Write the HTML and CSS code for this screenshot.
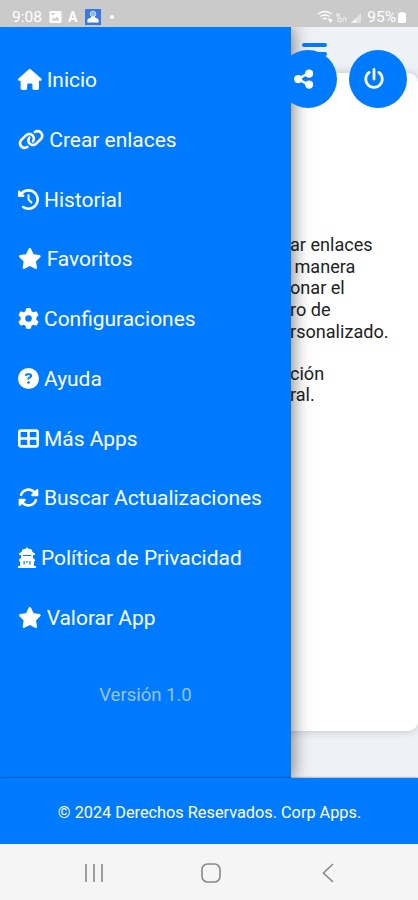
FILE: index.html
```
<!DOCTYPE html>
<html lang="es">
<head>
    <meta charset="UTF-8">
    <meta name="viewport" content="width=device-width, initial-scale=1.0">
    <title>Crear enlaces</title>
    <link rel="stylesheet" href="styles.css">
</head>
<body>
    <div class="status-bar">
        <span class="time">9:08</span>
        <svg class="status-photo" viewBox="0 0 12 12"><path fill-rule="evenodd" d="M1 0h10q1 0 1 1v10q0 1-1 1H1q-1 0-1-1V1q0-1 1-1zM2 9.500h8L7.500 5.500 5.500 8 4 6.500zM2 2v2h3V2z"/></svg>
        <span class="status-letter">A</span>
        <svg class="status-app" viewBox="0 0 16 16"><rect width="16" height="16" fill="#3b78e0"/><circle cx="8" cy="5" r="2.800" fill="#8fb4f2" stroke="#cfe0ff"/><path d="M2.500 13.500q-1-4 2.500-4.500l2-1.500h2l2 1.500q3.500.5 2.500 4.500z"/></svg>
        <span class="status-dot"></span>
        <svg class="status-signal" viewBox="0 0 46 14">
            <path d="M1 4q7-5 14 0M3.500 6.500q4.500-3 9 0M6 9q2-1.500 4 0" fill="none" stroke="#fff" stroke-width="1.500"/>
            <path d="M11 8l5 2-3 3z"/>
            <path d="M20 3v4M22 3v4M20 5h3M21 8v4h3V8zM26 8v4M29 8v4M26 8h3" fill="none" stroke="#fff" opacity=".7"/>
            <path d="M34 13L44 3v10z" opacity=".45"/><path d="M34 13l5-5v5z" opacity=".6"/>
        </svg>
        <span class="battery-text">95%</span>
        <svg class="battery" viewBox="0 0 8 11"><path d="M2.500 0h3v1H7q1 0 1 1v8q0 1-1 1H1q-1 0-1-1V2q0-1 1-1h1.500z"/></svg>
    </div>

    <div class="screen">
        <main class="content">
            <div class="card">
                <p>ar enlaces<br>&nbsp;manera<br>onar el<br>ro de<br>rsonalizado.</p>
                <p>ción<br>ral.</p>
            </div>
        </main>

        <div class="menu-toggle"><span></span><span></span></div>

        <nav class="sidebar">
            <a class="menu-item">
                <svg viewBox="0 0 576 512"><path d="M575.800 255.500c0 18-15 32.100-32 32.100h-32l.7 160.200c0 2.700-.2 5.400-.5 8.100V472c0 22.100-17.900 40-40 40H392c-22.100 0-40-17.900-40-40V384c0-17.700-14.300-32-32-32H256c-17.700 0-32 14.300-32 32v88c0 22.100-17.900 40-40 40H104c-22.100 0-40-17.900-40-40V287.600H32c-18 0-32-14-32-32.100c0-9 3-17 10-24L266.400 8c7-7 15-8 22-8s15 2 21 7L564.800 231.500c8 7 12 15 11 24z"/></svg>
                <span>Inicio</span>
            </a>
            <a class="menu-item">
                <svg viewBox="0 0 640 512"><path d="M579.800 267.700c56.500-56.500 56.500-148 0-204.500c-50-50-128.800-56.500-186.300-15.400l-1.600 1.100c-14.400 10.300-17.700 30.300-7.400 44.600s30.300 17.700 44.600 7.400l1.600-1.100c32.100-22.900 76-19.300 103.800 8.600c31.500 31.500 31.500 82.500 0 114L422.300 334.800c-31.500 31.500-82.500 31.500-114 0c-27.900-27.900-31.500-71.800-8.600-103.800l1.100-1.600c10.300-14.400 6.900-34.400-7.400-44.600s-34.400-6.900-44.600 7.400l-1.100 1.600C206.500 251.200 213 330 263 380c56.500 56.500 148 56.500 204.500 0L579.800 267.700zM60.200 244.300c-56.500 56.500-56.500 148 0 204.500c50 50 128.800 56.500 186.300 15.400l1.600-1.100c14.400-10.300 17.700-30.300 7.400-44.600s-30.300-17.700-44.600-7.400l-1.600 1.100c-32.100 22.900-76 19.300-103.800-8.600C74 372 74 321 105.500 289.500L217.700 177.200c31.500-31.500 82.500-31.500 114 0c27.900 27.900 31.500 71.800 8.600 103.900l-1.100 1.600c-10.300 14.400-6.900 34.400 7.400 44.600s34.400 6.900 44.600-7.400l1.100-1.600C433.500 260.800 427 182 377 132c-56.500-56.500-148-56.500-204.500 0L60.200 244.300z"/></svg>
                <span>Crear enlaces</span>
            </a>
            <a class="menu-item">
                <svg viewBox="0 0 512 512"><path d="M75 75L41 41C25.900 25.900 0 36.600 0 57.900V168c0 13.300 10.700 24 24 24H134.100c21.400 0 32.100-25.900 17-41l-30.800-30.800C155 85.500 203 64 256 64c106 0 192 86 192 192s-86 192-192 192c-40.800 0-78.600-12.700-109.700-34.400c-14.500-10.100-34.400-6.600-44.600 7.900s-6.600 34.400 7.900 44.600C151.200 495 201.700 512 256 512c141.400 0 256-114.600 256-256S397.400 0 256 0C185.300 0 121.300 28.700 75 75zm181 53c-13.300 0-24 10.700-24 24V256c0 6.400 2.500 12.500 7 17l72 72c9.400 9.400 24.600 9.400 33.900 0s9.400-24.600 0-33.900l-65-65V152c0-13.300-10.700-24-24-24z"/></svg>
                <span>Historial</span>
            </a>
            <a class="menu-item">
                <svg viewBox="0 0 576 512"><path d="M316.900 18C311.600 7 300.400 0 288.100 0s-23.400 7-28.800 18L195 150.300 51.400 171.500c-12 1.800-22 10.200-25.700 21.700s-.7 24.200 7.900 32.700L137.800 329 113.200 474.700c-2 12 3 24.200 12.900 31.300s23 8 33.800 2.300l128.300-68.500 128.300 68.500c10.800 5.700 23.900 4.900 33.800-2.300s14.900-19.300 12.900-31.300L438.500 329 542.700 225.900c8.600-8.500 11.700-21.200 7.900-32.700s-13.700-19.900-25.700-21.700L381.200 150.300 316.900 18z"/></svg>
                <span>Favoritos</span>
            </a>
            <a class="menu-item">
                <svg viewBox="0 0 512 512"><path d="M495.900 166.600c3.200 8.700 .5 18.400-6.400 24.600l-43.300 39.400c1.100 8.300 1.700 16.800 1.700 25.400s-.6 17.100-1.700 25.400l43.300 39.400c6.900 6.200 9.600 15.900 6.400 24.600c-4.400 11.900-9.700 23.300-15.800 34.300l-4.700 8.100c-6.600 11-14 21.400-22.100 31.200c-5.900 7.200-15.700 9.600-24.500 6.800l-55.700-17.700c-13.400 10.300-28.200 18.900-44 25.400l-12.500 57.100c-2 9.100-9 16.300-18.200 17.800c-13.800 2.300-28 3.500-42.500 3.500s-28.700-1.200-42.500-3.500c-9.200-1.500-16.200-8.700-18.200-17.800l-12.500-57.100c-15.800-6.500-30.600-15.100-44-25.400L83.100 425.900c-8.800 2.800-18.600 .3-24.500-6.800c-8.100-9.800-15.500-20.200-22.100-31.200l-4.700-8.100c-6.100-11-11.400-22.400-15.800-34.300c-3.200-8.700-.5-18.400 6.400-24.600l43.300-39.400C64.600 273.100 64 264.600 64 256s.6-17.100 1.700-25.400L22.400 191.200c-6.900-6.200-9.600-15.900-6.400-24.600c4.400-11.900 9.700-23.300 15.800-34.300l4.700-8.100c6.600-11 14-21.400 22.100-31.200c5.900-7.200 15.700-9.600 24.500-6.800l55.700 17.700c13.400-10.300 28.200-18.900 44-25.400l12.500-57.100c2-9.100 9-16.300 18.200-17.800C227.300 1.200 241.500 0 256 0s28.700 1.200 42.500 3.500c9.200 1.500 16.200 8.700 18.200 17.800l12.500 57.100c15.800 6.500 30.600 15.100 44 25.400l55.700-17.700c8.800-2.800 18.600-.3 24.500 6.800c8.100 9.800 15.500 20.200 22.100 31.200l4.700 8.100c6.100 11 11.400 22.400 15.800 34.300zM256 336a80 80 0 1 0 0-160 80 80 0 1 0 0 160z"/></svg>
                <span>Configuraciones</span>
            </a>
            <a class="menu-item">
                <svg viewBox="0 0 512 512"><circle cx="256" cy="256" r="256"/><path d="M192 174q8-22 31-22h58q39 0 39 39 0 22-20 34l-44 25v14" fill="none" stroke="#007bff" stroke-width="48" stroke-linecap="round"/><circle cx="256" cy="352" r="32" fill="#007bff"/></svg>
                <span>Ayuda</span>
            </a>
            <a class="menu-item">
                <svg viewBox="0 0 512 512"><path fill-rule="evenodd" d="M448 96V224H288V96H448zm0 192V416H288V288H448zM224 224H64V96H224V224zM64 288H224V416H64V288zM64 32C28.700 32 0 60.700 0 96V416c0 35.300 28.700 64 64 64H448c35.300 0 64-28.700 64-64V96c0-35.300-28.700-64-64-64H64z"/></svg>
                <span>Más Apps</span>
            </a>
            <a class="menu-item">
                <svg viewBox="0 0 512 512"><path d="M142.900 142.900c62.200-62.200 162.700-62.500 225.300-1L327 183c-6.900 6.900-8.900 17.200-5.200 26.200s12.500 14.800 22.200 14.800H472c13.300 0 24-10.700 24-24V72c0-9.700-5.800-18.500-14.800-22.200s-19.300-1.700-26.200 5.200L413.400 96.600c-87.600-86.500-228.700-86.200-315.800 1C73.200 122 55.600 150.700 44.800 181.400c-5.900 16.700 2.900 34.900 19.500 40.800s34.900-2.900 40.800-19.500c7.700-21.800 20.200-42.300 37.800-59.800zM16 312V440c0 9.700 5.800 18.500 14.800 22.200s19.300 1.700 26.200-5.200l41.600-41.600c87.600 86.500 228.700 86.200 315.800-1c24.400-24.400 42.100-53.100 52.900-83.700c5.900-16.700-2.900-34.900-19.500-40.800s-34.900 2.900-40.800 19.500c-7.700 21.800-20.200 42.300-37.800 59.800c-62.200 62.200-162.700 62.500-225.300 1L185 329c6.900-6.900 8.900-17.200 5.200-26.200s-12.500-14.800-22.200-14.800H40c-13.300 0-24 10.700-24 24z"/></svg>
                <span>Buscar Actualizaciones</span>
            </a>
            <a class="menu-item">
                <svg viewBox="0 0 18 21"><path fill-rule="evenodd" d="M4.500 2.500L8 1.500 9 0l1 1.500 3.500 1L14.500 5 17 6.500V8h-2v3l2 1.500V14l-1 .5V19h2v2H0v-2h2v-4.500L1 14v-1.500L3 11V8H1V6.500L3.500 5zM5 8v1h8V8zM5.500 14v3.500h1.200V14zM8.400 14v2h1.200v-2zM11.300 14v3.500h1.200V14z"/></svg>
                <span>Política de Privacidad</span>
            </a>
            <a class="menu-item">
                <svg viewBox="0 0 576 512"><path d="M316.900 18C311.600 7 300.400 0 288.100 0s-23.400 7-28.800 18L195 150.300 51.400 171.500c-12 1.800-22 10.200-25.700 21.700s-.7 24.200 7.900 32.700L137.800 329 113.200 474.700c-2 12 3 24.200 12.900 31.300s23 8 33.800 2.300l128.300-68.500 128.300 68.500c10.800 5.700 23.900 4.900 33.800-2.300s14.900-19.300 12.900-31.300L438.500 329 542.700 225.900c8.600-8.500 11.700-21.200 7.900-32.700s-13.700-19.900-25.700-21.700L381.200 150.300 316.900 18z"/></svg>
                <span>Valorar App</span>
            </a>
            <div class="version">Versión 1.0</div>
        </nav>

        <div class="actions">
            <button class="action-button" aria-label="Compartir">
                <svg viewBox="0 0 448 512"><path d="M352 112L96 256l256 144" fill="none" stroke="#fff" stroke-width="60"/><circle cx="96" cy="256" r="96"/><circle cx="352" cy="128" r="96"/><circle cx="352" cy="384" r="96"/></svg>
            </button>
            <button class="action-button" aria-label="Salir">
                <svg viewBox="0 0 512 512"><path d="M256 32v224M143 102a192 192 0 1 0 226 0" fill="none" stroke="#fff" stroke-width="64" stroke-linecap="round"/></svg>
            </button>
        </div>
    </div>

    <footer class="footer">© 2024 Derechos Reservados. Corp Apps.</footer>

    <div class="nav-bar">
        <svg viewBox="0 0 20 20"><path d="M2 1v18M10 1v18M18 1v18"/></svg>
        <svg viewBox="0 0 20 20"><rect x="1" y="1" width="18" height="18" rx="5.500"/></svg>
        <svg viewBox="0 0 20 20"><path d="M15 1L5.500 10l9.500 9"/></svg>
    </div>
</body>
</html>
```
FILE: styles.css
```
* {
    box-sizing: border-box;
}
body {
    font-family: Roboto, sans-serif;
    margin: 0;
    height: 900px;
    display: flex;
    flex-direction: column;
    overflow: hidden;
    background-color: #eef2f7;
}
svg {
    fill: #fff;
    flex: none;
}
.status-bar {
    height: 27px;
    flex: none;
    display: flex;
    align-items: center;
    padding: 7px 12px 0 12px;
    background-color: #cacaca;
    color: #fff;
    font-size: 14px;
}
.time {
    width: 37px;
    font-size: 15.5px;
}
.status-photo {
    width: 13px;
    height: 12px;
}
.status-letter {
    margin-left: 6px;
    width: 17px;
    font-weight: bold;
}
.status-app {
    width: 16px;
    height: 16px;
}
.status-dot {
    width: 4px;
    height: 4px;
    margin-left: 9px;
    border-radius: 50%;
    background-color: #fff;
}
.status-signal {
    width: 46px;
    height: 14px;
    margin-left: auto;
}
.battery-text {
    margin-left: 4px;
    font-size: 15.5px;
}
.battery {
    width: 8px;
    height: 11px;
    margin-left: 2px;
}
.screen {
    position: relative;
    height: 751px;
    flex: none;
    overflow: hidden;
}
.content {
    padding-top: 46px;
}
.card {
    height: 658px;
    padding: 161px 20px 0 290px;
    background-color: #fff;
    border-radius: 10px;
    box-shadow: 0 0 10px rgba(0, 0, 0, 0.2);
    color: #222;
    font-size: 18.1px;
    line-height: 21.7px;
    white-space: nowrap;
}
.card p {
    margin: 0 0 20px;
}
.menu-toggle {
    position: absolute;
    left: 302px;
    top: 16px;
    width: 25px;
    display: flex;
    flex-direction: column;
    gap: 5px;
}
.menu-toggle span {
    height: 4px;
    border-radius: 2px;
    background-color: #007bff;
}
.actions {
    position: absolute;
    top: 23px;
    right: 11px;
    display: flex;
    gap: 12px;
}
.action-button {
    width: 58px;
    height: 58px;
    padding: 0 9px 0 0;
    border: none;
    border-radius: 50%;
    background-color: #007bff;
    display: flex;
    align-items: center;
    justify-content: center;
}
.action-button svg {
    height: 22px;
}
/* Menú lateral sobre el contenido */
.sidebar {
    position: absolute;
    left: 0;
    top: 0;
    width: 291px;
    height: 752px;
    padding: 23px 18px 0;
    background-color: #007bff;
    box-shadow: 2px 0 16px rgba(0, 0, 0, 0.5);
    color: #fff;
}
.menu-item {
    height: 59.75px;
    display: flex;
    align-items: flex-start;
    gap: 5px;
    font-size: 20.95px;
    line-height: 60px;
    white-space: nowrap;
}
.menu-item svg {
    height: 21px;
    margin-top: 19px;
}
.version {
    margin-top: 36px;
    font-size: 18.5px;
    line-height: 22px;
    text-align: center;
    color: #99c3f2;
}
.footer {
    position: relative;
    height: 66px;
    flex: none;
    display: flex;
    align-items: center;
    justify-content: center;
    padding: 2px 0 0 1px;
    background-color: #007bff;
    box-shadow: 0 0 2px rgba(0, 0, 0, 0.6);
    color: #fff;
    font-size: 16.3px;
}
.nav-bar {
    position: relative;
    height: 56px;
    display: flex;
    justify-content: center;
    gap: 97px;
    padding: 19px 0 0 4px;
    background-color: #f5f5f5;
}
.nav-bar svg {
    width: 20px;
    height: 20px;
    fill: none;
    stroke: #888;
    stroke-width: 1.6;
}
```
